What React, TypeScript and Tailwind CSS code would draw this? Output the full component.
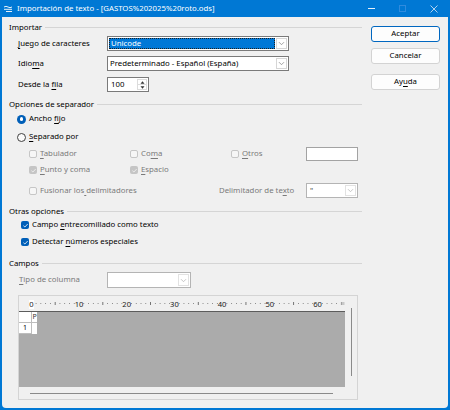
import React from "react";

const M = ({ t, i }: { t: string; i: number }) => (
  <>
    {t.slice(0, i)}
    <span className="underline decoration-[0.6px] underline-offset-[1.5px]">{t[i]}</span>
    {t.slice(i + 1)}
  </>
);

const Chevron = ({ c }: { c: string }) => (
  <svg width="7" height="5" viewBox="0 0 7 5">
    <path d="M1 1.2 L3.5 3.7 L6 1.2" fill="none" stroke={c} strokeWidth="0.8" />
  </svg>
);

const Check = ({ c }: { c: string }) => (
  <svg width="7" height="7" viewBox="0 0 7 7">
    <path d="M1.4 3.7 L2.9 5 L5.7 2" fill="none" stroke={c} strokeWidth="0.8" />
  </svg>
);

type CbState = "off" | "offdis" | "on" | "ondis";

const Checkbox = ({ s }: { s: CbState }) => {
  if (s === "on")
    return (
      <span className="flex h-[8px] w-[8px] shrink-0 items-center justify-center rounded-[2px] bg-[#005fb8]">
        <Check c="#ffffff" />
      </span>
    );
  if (s === "ondis")
    return (
      <span className="flex h-[8px] w-[8px] shrink-0 items-center justify-center rounded-[2px] bg-[#c5c5c5]">
        <Check c="#f4f4f4" />
      </span>
    );
  if (s === "offdis")
    return <span className="h-[8px] w-[8px] shrink-0 rounded-[2px] border border-[#c6c6c6] bg-[#f6f6f6]" />;
  return <span className="h-[8px] w-[8px] shrink-0 rounded-[2px] border border-[#8a8a8a] bg-white" />;
};

const SectionHeader = ({ title, mt }: { title: string; mt: string }) => (
  <div className={`flex h-[12px] items-center ${mt}`}>
    <span className="leading-[12px]">{title}</span>
    <div className="ml-[3px] h-px flex-1 bg-[#d5d5d5]" />
  </div>
);

const DropBtn = ({ c, b }: { c: string; b: string }) => (
  <div className={`my-[1px] mr-[1px] flex w-[11px] items-center justify-center border ${b} bg-white`}>
    <Chevron c={c} />
  </div>
);

const Ruler = () => {
  const items: React.ReactNode[] = [];
  const x0 = 12.3;
  const step = 4.77;
  for (let i = 0; i <= 65; i++) {
    const x = x0 + i * step;
    if (i % 10 === 0) {
      items.push(
        <text
          key={`t${i}`}
          x={x}
          y={10.6}
          textAnchor="middle"
          fontSize="7.6"
          fontFamily="'Noto Sans', sans-serif"
          fill="#1a1a1a"
        >
          {i}
        </text>
      );
    } else if (i % 5 === 0) {
      items.push(<rect key={`k${i}`} x={x - 0.4} y={6} width={0.8} height={3} fill="#555" />);
    } else {
      items.push(<rect key={`d${i}`} x={x - 0.4} y={7.1} width={0.8} height={0.8} fill="#555" />);
    }
  }
  return (
    <svg width="326" height="15" viewBox="0 0 326 15" className="block">
      <rect x={10} y={4} width={5} height={9} fill="#ffffff" />
      {items}
      <rect x={322.5} y={6} width={3} height={3} fill="#c8c8c8" />
    </svg>
  );
};

export default function App() {
  return (
    <div className="flex h-[410px] w-[450px] flex-col bg-[#0078d4] font-['Noto_Sans',sans-serif] text-[7.8px] text-[#000000]">
      {/* Title bar */}
      <div className="flex h-[17px] shrink-0 items-center text-white">
        <svg width="10" height="8" viewBox="0 0 10 8" className="ml-[3px]">
          <path d="M1 2 Q3 0.6 5 2 T9 2" fill="none" stroke="#fff" strokeWidth="0.9" />
          <path d="M1 4.3 H9" stroke="#fff" strokeWidth="0.9" />
          <path d="M3 6.5 H9" stroke="#fff" strokeWidth="0.9" />
        </svg>
        <span className="ml-[4px] text-[7.8px] leading-[17px]">
          Importación de texto - [GASTOS%202025%20roto.ods]
        </span>
        <div className="flex-1" />
        <div className="mr-[24px] h-[0.8px] w-[7px] bg-[#e6f0fa]" />
        <div className="mr-[24px] h-[7px] w-[7px] border border-[#2f8bde]" />
        <svg width="8" height="8" viewBox="0 0 8 8" className="mr-[12px]">
          <path d="M0.5 0.5 L7.5 7.5 M7.5 0.5 L0.5 7.5" stroke="#dce9f7" strokeWidth="0.8" />
        </svg>
      </div>

      {/* Body */}
      <div className="mx-[2px] mb-[2px] flex flex-1 rounded-b-[4px] bg-[#f0f0f0]">
        {/* Left column */}
        <div className="flex w-[360px] flex-col pl-[7px] pt-[4px]">
          <SectionHeader title="Importar" mt="" />
          <div className="mt-[3px] flex h-[15px] items-center">
            <span className="ml-[9px] w-[89px]">
              <M t="Juego de caracteres" i={0} />
            </span>
            <div className="flex h-[15px] w-[182px] border border-[#7a7a7a] bg-white">
              <div className="m-[1px] flex flex-1 items-center border border-dotted border-[#202020] bg-[#0078d7] pl-[1px] text-white">
                Unicode
              </div>
              <DropBtn c="#8a8a8a" b="border-[#d6d6d6]" />
            </div>
          </div>
          <div className="mt-[5px] flex h-[15px] items-center">
            <span className="ml-[9px] w-[89px]">
              <M t="Idioma" i={4} />
            </span>
            <div className="flex h-[15px] w-[182px] border border-[#7a7a7a] bg-white">
              <div className="flex flex-1 items-center pl-[2px]">Predeterminado - Español (España)</div>
              <DropBtn c="#8a8a8a" b="border-[#d6d6d6]" />
            </div>
          </div>
          <div className="mt-[6px] flex h-[15px] items-center">
            <span className="ml-[9px] w-[89px]">
              <M t="Desde la fila" i={9} />
            </span>
            <div className="flex h-[15px] w-[42px] border border-[#7a7a7a] bg-white">
              <div className="flex flex-1 items-center pl-[3px]">100</div>
              <div className="my-[1px] mr-[1px] flex w-[10px] flex-col border border-[#dcdcdc]">
                <div className="flex flex-1 items-center justify-center border-b border-[#dcdcdc]">
                  <svg width="5" height="3" viewBox="0 0 5 3">
                    <path d="M0.5 2.8 L2.5 0.3 L4.5 2.8 Z" fill="#333" />
                  </svg>
                </div>
                <div className="flex flex-1 items-center justify-center">
                  <svg width="5" height="3" viewBox="0 0 5 3">
                    <path d="M0.5 0.2 L2.5 2.7 L4.5 0.2 Z" fill="#333" />
                  </svg>
                </div>
              </div>
            </div>
          </div>

          <SectionHeader title="Opciones de separador" mt="mt-[6px]" />
          <div className="mt-[3px] flex h-[12px] items-center">
            <span className="ml-[8px] flex h-[9px] w-[9px] items-center justify-center rounded-full bg-[#005fb8]">
              <span className="h-[3.5px] w-[3.5px] rounded-full bg-white" />
            </span>
            <span className="ml-[3px]">
              <M t="Ancho fijo" i={6} />
            </span>
          </div>
          <div className="mt-[6px] flex h-[12px] items-center">
            <span className="ml-[8px] h-[9px] w-[9px] rounded-full border border-[#404040] bg-[#fafafa]" />
            <span className="ml-[3px]">
              <M t="Separado por" i={0} />
            </span>
          </div>
          <div className="mt-[4px] flex h-[14px] items-center text-[#7a7a7a]">
            <div className="ml-[20px] flex w-[101px] items-center gap-[3px]">
              <Checkbox s="offdis" />
              <span>
                <M t="Tabulador" i={0} />
              </span>
            </div>
            <div className="flex w-[101px] items-center gap-[3px]">
              <Checkbox s="offdis" />
              <span>
                <M t="Coma" i={2} />
              </span>
            </div>
            <div className="flex w-[75px] items-center gap-[3px]">
              <Checkbox s="offdis" />
              <span>
                <M t="Otros" i={0} />
              </span>
            </div>
            <div className="h-[14px] w-[52px] border border-[#a3a3a3] bg-white" />
          </div>
          <div className="mt-[3px] flex h-[12px] items-center text-[#7a7a7a]">
            <div className="ml-[20px] flex w-[101px] items-center gap-[3px]">
              <Checkbox s="ondis" />
              <span>
                <M t="Punto y coma" i={0} />
              </span>
            </div>
            <div className="flex w-[101px] items-center gap-[3px]">
              <Checkbox s="ondis" />
              <span>
                <M t="Espacio" i={0} />
              </span>
            </div>
          </div>
          <div className="mt-[7px] flex h-[15px] items-center text-[#7a7a7a]">
            <div className="ml-[20px] flex w-[190px] items-center gap-[3px]">
              <Checkbox s="offdis" />
              <span>
                <M t="Fusionar los delimitadores" i={12} />
              </span>
            </div>
            <span className="w-[87px]">
              <M t="Delimitador de texto" i={17} />
            </span>
            <div className="flex h-[15px] w-[52px] border border-[#b4b4b4] bg-white">
              <div className="flex flex-1 items-center pl-[3px] text-[#505050]">"</div>
              <DropBtn c="#b8b8b8" b="border-[#e2e2e2]" />
            </div>
          </div>

          <SectionHeader title="Otras opciones" mt="mt-[7px]" />
          <div className="mt-[2px] flex h-[12px] items-center gap-[3px]">
            <span className="ml-[9px]" />
            <Checkbox s="on" />
            <span>
              <M t="Campo entrecomillado como texto" i={6} />
            </span>
          </div>
          <div className="mt-[5px] flex h-[12px] items-center gap-[3px]">
            <span className="ml-[9px]" />
            <Checkbox s="on" />
            <span>
              <M t="Detectar números especiales" i={9} />
            </span>
          </div>

          <SectionHeader title="Campos" mt="mt-[9px]" />
          <div className="mt-[3px] flex h-[16px] items-center">
            <span className="ml-[10px] w-[88px] text-[#7a7a7a]">
              <M t="Tipo de columna" i={0} />
            </span>
            <div className="flex h-[16px] w-[84px] border border-[#b4b4b4] bg-white">
              <div className="flex-1" />
              <DropBtn c="#b8b8b8" b="border-[#e2e2e2]" />
            </div>
          </div>

          {/* Preview */}
          <div className="ml-[9px] mt-[7px] flex h-[105px] w-[340px] flex-col border border-[#d4d4d4] bg-[#f0f0f0]">
            <div className="flex">
              <div className="flex w-[326px] flex-col">
                <Ruler />
                <div className="h-px bg-[#5c5c5c]" />
                <div className="flex h-[75px] flex-col items-start bg-[#ababab]">
                  <div className="flex">
                    <div className="h-[11px] w-[13px] border-b border-r border-[#bdbdbd] bg-white" />
                    <div className="h-[11px] w-[5px] overflow-hidden border-b border-[#bdbdbd] bg-white pl-[0.5px] text-[7px] leading-[10px] text-[#333]">
                      P
                    </div>
                  </div>
                  <div className="flex">
                    <div className="flex h-[11px] w-[13px] items-center justify-center border-b border-r border-[#bdbdbd] bg-white text-[7px]">
                      1
                    </div>
                    <div className="h-[11px] w-[5px] bg-white" />
                  </div>
                </div>
              </div>
              <div className="flex flex-1 justify-center pt-[12px]">
                <div className="h-[68px] w-px bg-[#8a8a8a]" />
              </div>
            </div>
            <div className="flex h-[12px] items-center pl-[11px]">
              <div className="h-px w-[303px] bg-[#8a8a8a]" />
            </div>
          </div>
        </div>

        {/* Buttons */}
        <div className="ml-[9px] flex w-[69px] flex-col pt-[9px]">
          <div className="flex h-[16px] items-center justify-center rounded-[3px] border border-[#0067c0] bg-[#fdfdfd]">
            Aceptar
          </div>
          <div className="mt-[6px] flex h-[16px] items-center justify-center rounded-[3px] border border-[#d3d3d3] bg-[#fdfdfd]">
            Cancelar
          </div>
          <div className="mt-[10px] flex h-[16px] items-center justify-center rounded-[3px] border border-[#d3d3d3] bg-[#fdfdfd]">
            <M t="Ayuda" i={2} />
          </div>
        </div>
      </div>
    </div>
  );
}
